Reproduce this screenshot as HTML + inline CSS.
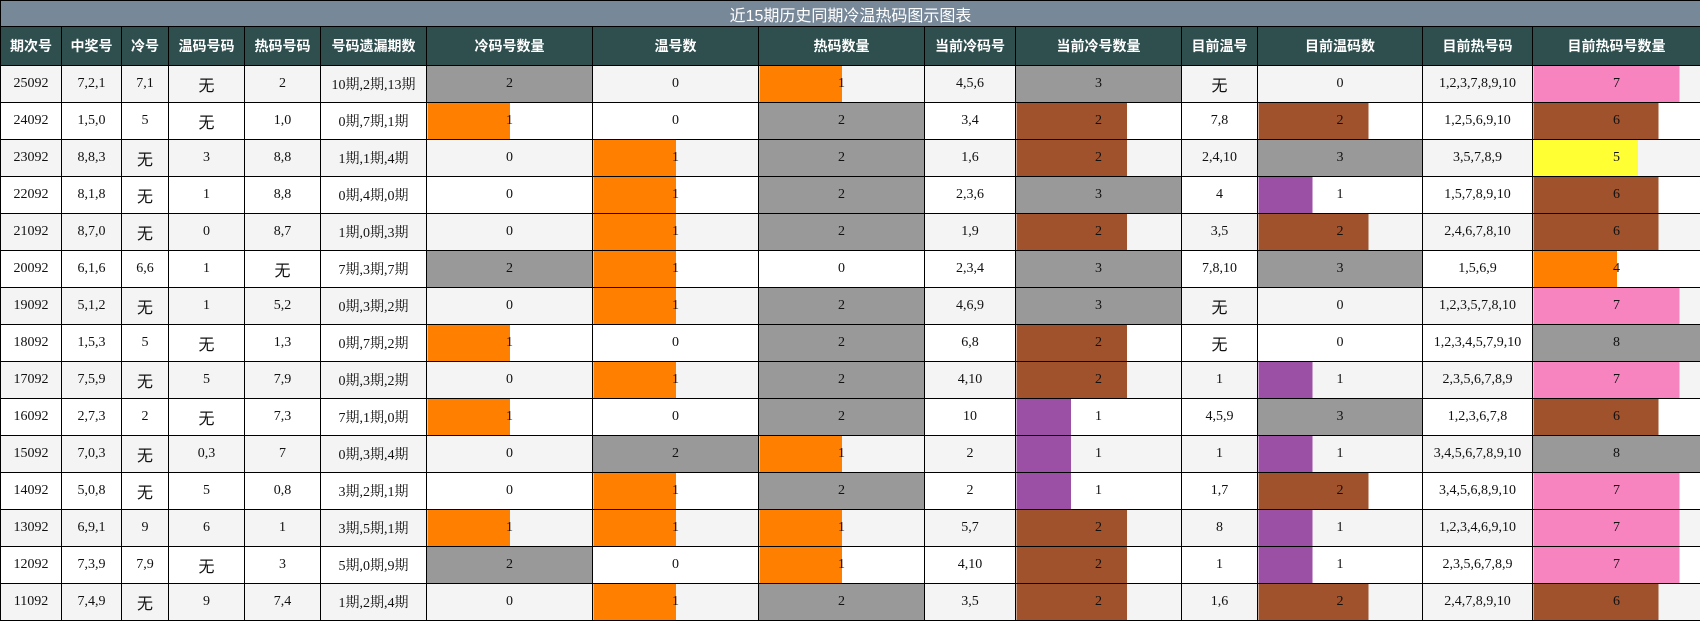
<!DOCTYPE html>
<html><head><meta charset="utf-8"><style>
body{margin:0;width:1700px;height:620px;overflow:hidden;background:#fff}
table{border-collapse:collapse;table-layout:fixed;width:1700px;font-family:"Liberation Serif","Noto Serif CJK SC",serif;font-size:14px;color:#111}
td,th{border:1px solid #000;text-align:center;padding:0;white-space:nowrap;overflow:hidden}
.t th{background:#778899;color:#fff;font-family:"Liberation Sans","Noto Sans CJK SC",sans-serif;font-weight:normal;font-size:16px;height:25px}
.h th{background:#2f4f4f;color:#fff;font-family:"Liberation Sans","Noto Sans CJK SC",sans-serif;font-weight:bold;font-size:14px;height:38px}
tbody tr{height:37px}
tbody tr:nth-child(odd){background:#f4f4f4}
tbody tr:nth-child(even){background:#fff}
.w{font-family:"Noto Sans CJK SC",sans-serif;font-size:16px}
.a2{background:#999}
.a1{background:linear-gradient(90deg,#ff7f00 50%,transparent 50%)}
.g3{background:#999}
.b2{background:linear-gradient(90deg,#a0522d 67%,transparent 67%)}
.p1{background:linear-gradient(90deg,#9b4fa5 33%,transparent 33%)}
.g8{background:#999}
.k7{background:linear-gradient(90deg,#f783bf 87.5%,transparent 87.5%)}
.b6{background:linear-gradient(90deg,#a0522d 75%,transparent 75%)}
.y5{background:linear-gradient(90deg,#ffff33 62.5%,transparent 62.5%)}
.o4{background:linear-gradient(90deg,#ff7f00 50%,transparent 50%)}
</style></head><body>
<table>
<colgroup><col style="width:61px"><col style="width:60px"><col style="width:47px"><col style="width:76px"><col style="width:76px"><col style="width:106px"><col style="width:166px"><col style="width:166px"><col style="width:166px"><col style="width:91px"><col style="width:166px"><col style="width:76px"><col style="width:165px"><col style="width:110px"><col style="width:168px"></colgroup>
<thead>
<tr class="t"><th colspan="15">近15期历史同期冷温热码图示图表</th></tr>
<tr class="h"><th>期次号</th><th>中奖号</th><th>冷号</th><th>温码号码</th><th>热码号码</th><th>号码遗漏期数</th><th>冷码号数量</th><th>温号数</th><th>热码数量</th><th>当前冷码号</th><th>当前冷号数量</th><th>目前温号</th><th>目前温码数</th><th>目前热号码</th><th>目前热码号数量</th></tr>
</thead>
<tbody>
<tr><td>25092</td><td>7,2,1</td><td>7,1</td><td class="w">无</td><td>2</td><td>10期,2期,13期</td><td class="a2">2</td><td>0</td><td class="a1">1</td><td>4,5,6</td><td class="g3">3</td><td class="w">无</td><td>0</td><td>1,2,3,7,8,9,10</td><td class="k7">7</td></tr>
<tr><td>24092</td><td>1,5,0</td><td>5</td><td class="w">无</td><td>1,0</td><td>0期,7期,1期</td><td class="a1">1</td><td>0</td><td class="a2">2</td><td>3,4</td><td class="b2">2</td><td>7,8</td><td class="b2">2</td><td>1,2,5,6,9,10</td><td class="b6">6</td></tr>
<tr><td>23092</td><td>8,8,3</td><td class="w">无</td><td>3</td><td>8,8</td><td>1期,1期,4期</td><td>0</td><td class="a1">1</td><td class="a2">2</td><td>1,6</td><td class="b2">2</td><td>2,4,10</td><td class="g3">3</td><td>3,5,7,8,9</td><td class="y5">5</td></tr>
<tr><td>22092</td><td>8,1,8</td><td class="w">无</td><td>1</td><td>8,8</td><td>0期,4期,0期</td><td>0</td><td class="a1">1</td><td class="a2">2</td><td>2,3,6</td><td class="g3">3</td><td>4</td><td class="p1">1</td><td>1,5,7,8,9,10</td><td class="b6">6</td></tr>
<tr><td>21092</td><td>8,7,0</td><td class="w">无</td><td>0</td><td>8,7</td><td>1期,0期,3期</td><td>0</td><td class="a1">1</td><td class="a2">2</td><td>1,9</td><td class="b2">2</td><td>3,5</td><td class="b2">2</td><td>2,4,6,7,8,10</td><td class="b6">6</td></tr>
<tr><td>20092</td><td>6,1,6</td><td>6,6</td><td>1</td><td class="w">无</td><td>7期,3期,7期</td><td class="a2">2</td><td class="a1">1</td><td>0</td><td>2,3,4</td><td class="g3">3</td><td>7,8,10</td><td class="g3">3</td><td>1,5,6,9</td><td class="o4">4</td></tr>
<tr><td>19092</td><td>5,1,2</td><td class="w">无</td><td>1</td><td>5,2</td><td>0期,3期,2期</td><td>0</td><td class="a1">1</td><td class="a2">2</td><td>4,6,9</td><td class="g3">3</td><td class="w">无</td><td>0</td><td>1,2,3,5,7,8,10</td><td class="k7">7</td></tr>
<tr><td>18092</td><td>1,5,3</td><td>5</td><td class="w">无</td><td>1,3</td><td>0期,7期,2期</td><td class="a1">1</td><td>0</td><td class="a2">2</td><td>6,8</td><td class="b2">2</td><td class="w">无</td><td>0</td><td>1,2,3,4,5,7,9,10</td><td class="g8">8</td></tr>
<tr><td>17092</td><td>7,5,9</td><td class="w">无</td><td>5</td><td>7,9</td><td>0期,3期,2期</td><td>0</td><td class="a1">1</td><td class="a2">2</td><td>4,10</td><td class="b2">2</td><td>1</td><td class="p1">1</td><td>2,3,5,6,7,8,9</td><td class="k7">7</td></tr>
<tr><td>16092</td><td>2,7,3</td><td>2</td><td class="w">无</td><td>7,3</td><td>7期,1期,0期</td><td class="a1">1</td><td>0</td><td class="a2">2</td><td>10</td><td class="p1">1</td><td>4,5,9</td><td class="g3">3</td><td>1,2,3,6,7,8</td><td class="b6">6</td></tr>
<tr><td>15092</td><td>7,0,3</td><td class="w">无</td><td>0,3</td><td>7</td><td>0期,3期,4期</td><td>0</td><td class="a2">2</td><td class="a1">1</td><td>2</td><td class="p1">1</td><td>1</td><td class="p1">1</td><td>3,4,5,6,7,8,9,10</td><td class="g8">8</td></tr>
<tr><td>14092</td><td>5,0,8</td><td class="w">无</td><td>5</td><td>0,8</td><td>3期,2期,1期</td><td>0</td><td class="a1">1</td><td class="a2">2</td><td>2</td><td class="p1">1</td><td>1,7</td><td class="b2">2</td><td>3,4,5,6,8,9,10</td><td class="k7">7</td></tr>
<tr><td>13092</td><td>6,9,1</td><td>9</td><td>6</td><td>1</td><td>3期,5期,1期</td><td class="a1">1</td><td class="a1">1</td><td class="a1">1</td><td>5,7</td><td class="b2">2</td><td>8</td><td class="p1">1</td><td>1,2,3,4,6,9,10</td><td class="k7">7</td></tr>
<tr><td>12092</td><td>7,3,9</td><td>7,9</td><td class="w">无</td><td>3</td><td>5期,0期,9期</td><td class="a2">2</td><td>0</td><td class="a1">1</td><td>4,10</td><td class="b2">2</td><td>1</td><td class="p1">1</td><td>2,3,5,6,7,8,9</td><td class="k7">7</td></tr>
<tr><td>11092</td><td>7,4,9</td><td class="w">无</td><td>9</td><td>7,4</td><td>1期,2期,4期</td><td>0</td><td class="a1">1</td><td class="a2">2</td><td>3,5</td><td class="b2">2</td><td>1,6</td><td class="b2">2</td><td>2,4,7,8,9,10</td><td class="b6">6</td></tr>
</tbody></table>
</body></html>
